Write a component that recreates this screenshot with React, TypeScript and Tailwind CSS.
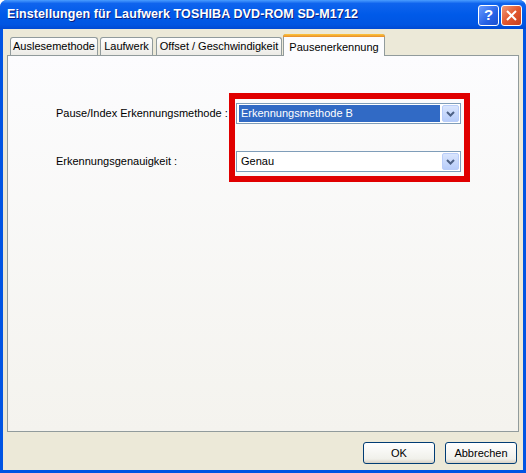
import { ReactNode } from "react";

const font = { fontFamily: '"Liberation Sans", Arial, sans-serif' };

function Tab({ label, active, className }: { label: string; active?: boolean; className: string }) {
  if (active) {
    return (
      <div className={`relative -mb-px z-10 flex h-[22px] items-start justify-center border border-b-0 border-[#919b9c] bg-[#fcfcfe] pt-[4px] text-[11px] text-black rounded-t-[3px] ${className}`}>
        <div className="absolute -left-px -right-px -top-px h-[3px] rounded-t-[3px] bg-[linear-gradient(#ffc83c,#e68b2c)]" />
        {label}
      </div>
    );
  }
  return (
    <div className={`mt-[3px] flex h-[18px] items-center justify-center border border-b-0 border-[#919b9c] bg-[linear-gradient(#ffffff,#ecebe6)] text-[11px] text-black rounded-t-[3px] ${className}`}>
      {label}
    </div>
  );
}

function Combo({ value, selected }: { value: string; selected?: boolean }) {
  return (
    <div className="flex h-[21px] w-[225px] items-stretch border border-[#7f9db9] bg-white p-[1px]">
      <div className="flex flex-1 items-center pl-px">
        <span
          className={
            selected
              ? "flex h-full flex-1 items-center bg-[#316ac5] pl-[2px] text-[11px] text-white mr-[2px]"
              : "pl-[2px] text-[11px] text-black"
          }
        >
          {value}
        </span>
      </div>
      <div className="flex w-[17px] items-center justify-center rounded-[2px] border border-[#b9cdf9] bg-[linear-gradient(#d9e5fd,#b8cdfa)]">
        <svg width="9" height="6" viewBox="0 0 9 6">
          <polyline points="1,1 4.5,4.5 8,1" fill="none" stroke="#4d6185" strokeWidth="2" />
        </svg>
      </div>
    </div>
  );
}

function XpButton({ children }: { children: ReactNode }) {
  return (
    <div className="flex h-[22px] w-[72px] items-center justify-center rounded-[3px] border border-[#003c74] bg-[linear-gradient(#ffffff,#f0f0ea_80%,#d6d0c5)] text-[11px] text-black">
      {children}
    </div>
  );
}

export default function App() {
  return (
    <div className="flex h-[473px] w-[526px] flex-col overflow-hidden rounded-t-[7px] bg-[#0054e3]" style={font}>
      <div className="flex h-[29px] items-center justify-between bg-[linear-gradient(#4a9dff_0%,#0f64ee_12%,#005ae9_50%,#0055e2_85%,#0049d3_100%)] pl-[7px] pr-[4px]">
        <span className="text-[12.5px] font-bold tracking-[0.1px] text-white [text-shadow:1px_1px_0_#0a1f80]">
          Einstellungen für Laufwerk TOSHIBA DVD-ROM SD-M1712
        </span>
        <div className="flex gap-[2px] pt-px">
          <div className="flex h-[21px] w-[21px] items-center justify-center rounded-[3px] border border-white bg-[linear-gradient(135deg,#6a9cff,#2762e6_60%,#1a4fd0)] text-[15px] font-bold text-white">
            ?
          </div>
          <div className="flex h-[21px] w-[21px] items-center justify-center rounded-[3px] border border-white bg-[linear-gradient(135deg,#ef9a7a,#e2582f_50%,#c9401e)]">
            <svg width="11" height="11" viewBox="0 0 11 11">
              <path d="M1 1 L10 10 M10 1 L1 10" stroke="white" strokeWidth="2" />
            </svg>
          </div>
        </div>
      </div>
      <div className="mx-[3px] mb-[3px] flex flex-1 flex-col bg-[#ece9d8] px-[4px]">
        <div className="flex items-end pl-[3px] pt-[5px]">
          <Tab label="Auslesemethode" className="w-[88px]" />
          <Tab label="Laufwerk" className="ml-[2px] w-[53px]" />
          <Tab label="Offset / Geschwindigkeit" className="ml-[3px] w-[126px]" />
          <Tab label="Pausenerkennung" active className="ml-[1px] w-[102px]" />
        </div>
        <div className="flex h-[377px] border border-[#919b9c] bg-[linear-gradient(#fcfcfe,#f4f3ee)] pl-[48px] pt-[37px]">
          <div className="flex w-[173px] flex-col gap-[27px] pt-[10px]">
            <div className="flex h-[21px] items-center text-[11px] text-black">Pause/Index Erkennungsmethode :</div>
            <div className="flex h-[21px] items-center text-[11px] text-black">Erkennungsgenauigkeit :</div>
          </div>
          <div className="flex h-[89px] w-[241px] flex-col gap-[27px] border-[6px] border-[#e00000] pb-[4px] pl-px pr-[3px] pt-[4px]">
            <Combo value="Erkennungsmethode B" selected />
            <Combo value="Genau" />
          </div>
        </div>
        <div className="flex justify-end gap-[10px] pr-[2px] pt-[10px]">
          <XpButton>OK</XpButton>
          <XpButton>Abbrechen</XpButton>
        </div>
      </div>
    </div>
  );
}
